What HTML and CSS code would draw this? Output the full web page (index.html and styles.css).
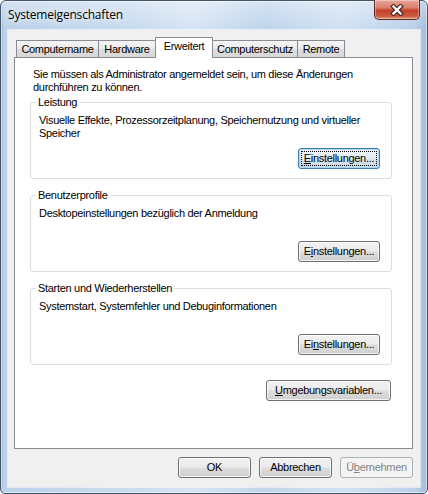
FILE: index.html
```html
<!DOCTYPE html>
<html lang="de">
<head>
<meta charset="utf-8">
<title>Systemeigenschaften</title>
<link rel="stylesheet" href="styles.css">
</head>
<body>
<div class="window">
  <div class="titlebar">
    <span class="title">Systemeigenschaften</span>
    <button class="close" aria-label="Schließen">
      <svg width="14" height="12" viewBox="0 0 14 12">
        <path d="M3.5 2.5 L10.5 9.5 M10.5 2.5 L3.5 9.5" stroke="#3f2622" stroke-width="4.6" stroke-linecap="square" fill="none"/>
        <path d="M3.5 2.5 L10.5 9.5 M10.5 2.5 L3.5 9.5" stroke="#ffffff" stroke-width="2.4" stroke-linecap="square" fill="none"/>
      </svg>
    </button>
  </div>
  <div class="client">
    <div class="tabs">
      <div class="tab w-name">Computername</div>
      <div class="tab w-hw">Hardware</div>
      <div class="tab w-adv active">Erweitert</div>
      <div class="tab w-prot">Computerschutz</div>
      <div class="tab w-rem">Remote</div>
    </div>
    <div class="panel">
      <p class="intro">Sie müssen als Administrator angemeldet sein, um diese Änderungen<br>durchführen zu können.</p>
      <fieldset class="group first">
        <legend>Leistung</legend>
        <p class="desc">Visuelle Effekte, Prozessorzeitplanung, Speichernutzung und virtueller<br>Speicher</p>
        <div class="row"><button class="btn set focus"><u>E</u>instellungen...</button></div>
      </fieldset>
      <fieldset class="group">
        <legend>Benutzerprofile</legend>
        <p class="desc">Desktopeinstellungen bezüglich der Anmeldung</p>
        <div class="row"><button class="btn set">E<u>i</u>nstellungen...</button></div>
      </fieldset>
      <fieldset class="group">
        <legend>Starten und Wiederherstellen</legend>
        <p class="desc">Systemstart, Systemfehler und Debuginformationen</p>
        <div class="row"><button class="btn set">Ei<u>n</u>stellungen...</button></div>
      </fieldset>
      <div class="row env-row"><button class="btn env"><u>U</u>mgebungsvariablen...</button></div>
    </div>
    <div class="actions">
      <button class="btn act">OK</button>
      <button class="btn act">Abbrechen</button>
      <button class="btn act" disabled>Ü<u>b</u>ernehmen</button>
    </div>
  </div>
</div>
</body>
</html>
```
FILE: styles.css
```css
html, body {
  margin: 0;
  padding: 0;
}
body {
  width: 428px;
  height: 494px;
  overflow: hidden;
  background: #ffffff;
  font-family: "Liberation Sans", Arial, sans-serif;
  font-size: 11px;
  letter-spacing: -0.3px;
  color: #000;
}
.window {
  box-sizing: border-box;
  width: 428px;
  height: 494px;
  border: 1px solid #44556a;
  border-radius: 6px 6px 5px 5px;
  padding: 0 7px 6px 7px;
  display: flex;
  flex-direction: column;
  background:
    linear-gradient(180deg, rgba(255,255,255,0.35) 0, rgba(255,255,255,0) 26px),
    linear-gradient(90deg, #9fb8d6 0, #bcd2ea 3px, #c9dbef 30%, #d7e5f4 45%, #c0d5ec 62%, #d2e2f3 80%, #bcd1ea 97%, #a3bcd9 100%);
  box-shadow: inset 0 0 0 1px rgba(255,255,255,0.5);
}
.titlebar {
  height: 29px;
  flex-shrink: 0;
  display: flex;
  align-items: flex-start;
}
.title {
  margin-top: 6px;
  font-family: "Open Sans", "Noto Sans", sans-serif;
  font-size: 12px;
  letter-spacing: -0.2px;
  line-height: 16px;
  color: #000;
  text-shadow: 0 0 6px rgba(255,255,255,0.9), 0 0 10px rgba(255,255,255,0.7);
}
.close {
  margin: -1px 0 0 auto;
  width: 46px;
  height: 20px;
  padding: 0;
  border: 1px solid #5c2a22;
  border-top: none;
  border-radius: 0 0 5px 5px;
  background: linear-gradient(180deg, #e8a597 0%, #d9806c 40%, #c4402c 55%, #cc5a3f 85%, #e49a78 100%);
  box-shadow: inset 0 0 0 1px rgba(255,255,255,0.35);
  display: flex;
  align-items: center;
  justify-content: center;
}
.client {
  flex: 1;
  box-sizing: border-box;
  background: #f0f0f0;
  padding: 7px 7px 9px 6px;
  display: flex;
  flex-direction: column;
  box-shadow: 0 0 0 1px rgba(255,255,255,0.55);
}
.tabs {
  height: 20px;
  flex-shrink: 0;
  display: flex;
  align-items: flex-end;
  padding-left: 2px;
}
.tab {
  box-sizing: border-box;
  height: 17px;
  margin-left: -1px;
  border: 1px solid #898c95;
  border-bottom: none;
  background: linear-gradient(180deg, #f4f4f4 0%, #ebebeb 50%, #dedede 51%, #d8d8d8 100%);
  line-height: 16px;
  text-align: center;
  white-space: nowrap;
}
.tab:first-child { margin-left: 0; }
.tab.active {
  position: relative;
  z-index: 1;
  height: 21px;
  margin-bottom: -1px;
  padding-top: 0;
  background: #ffffff;
  line-height: 17px;
}
.w-name { width: 83px; }
.w-hw { width: 58px; }
.w-adv { width: 58px; }
.w-prot { width: 86px; }
.w-rem { width: 48px; }
.panel {
  box-sizing: border-box;
  height: 392px;
  flex-shrink: 0;
  background: #ffffff;
  border: 1px solid #898c95;
  padding: 10px 20px 0 15px;
}
.intro {
  margin: 0 0 0 3px;
  line-height: 13px;
}
.group {
  margin: 10px 0 0 0;
  padding: 5px 11px 9px 8px;
  border: 1px solid #d5dfe5;
  border-radius: 3px;
  min-width: 0;
}
.group.first { margin-top: 2px; }
.group legend {
  padding: 0 2px;
  margin-left: -3px;
  line-height: 13px;
}
.desc {
  margin: 0;
  min-height: 34px;
  line-height: 13px;
}
.row {
  display: flex;
  justify-content: flex-end;
}
.btn {
  box-sizing: border-box;
  height: 21px;
  padding: 0;
  border: 1px solid #707070;
  border-radius: 3px;
  background: linear-gradient(180deg, #f2f2f2 0%, #ebebeb 48%, #dddddd 52%, #cfcfcf 100%);
  box-shadow: inset 0 0 0 1px rgba(255,255,255,0.75);
  font-family: inherit;
  font-size: 11px;
  letter-spacing: -0.3px;
  line-height: 19px;
  color: #000;
  text-align: center;
  white-space: nowrap;
}
.btn u { text-decoration: underline; text-underline-offset: 1px; }
.btn.set { width: 82px; }
.btn.focus {
  border-color: #3c7fb1;
  background: linear-gradient(180deg, #f1f6fa 0%, #e4edf4 48%, #d6e2ec 52%, #cbdbe7 100%);
  box-shadow: inset 0 0 0 1px #a8d8f2;
  outline: 1px dotted #000;
  outline-offset: -4px;
}
.env-row {
  margin-top: 15px;
  padding-right: 1px;
}
.btn.env { width: 125px; }
.actions {
  margin-top: 8px;
  display: flex;
  justify-content: flex-end;
  gap: 8px;
}
.btn.act { width: 73px; }
.btn:disabled {
  border-color: #adb2b5;
  background: #f4f4f4;
  box-shadow: none;
  color: #838383;
}
```
